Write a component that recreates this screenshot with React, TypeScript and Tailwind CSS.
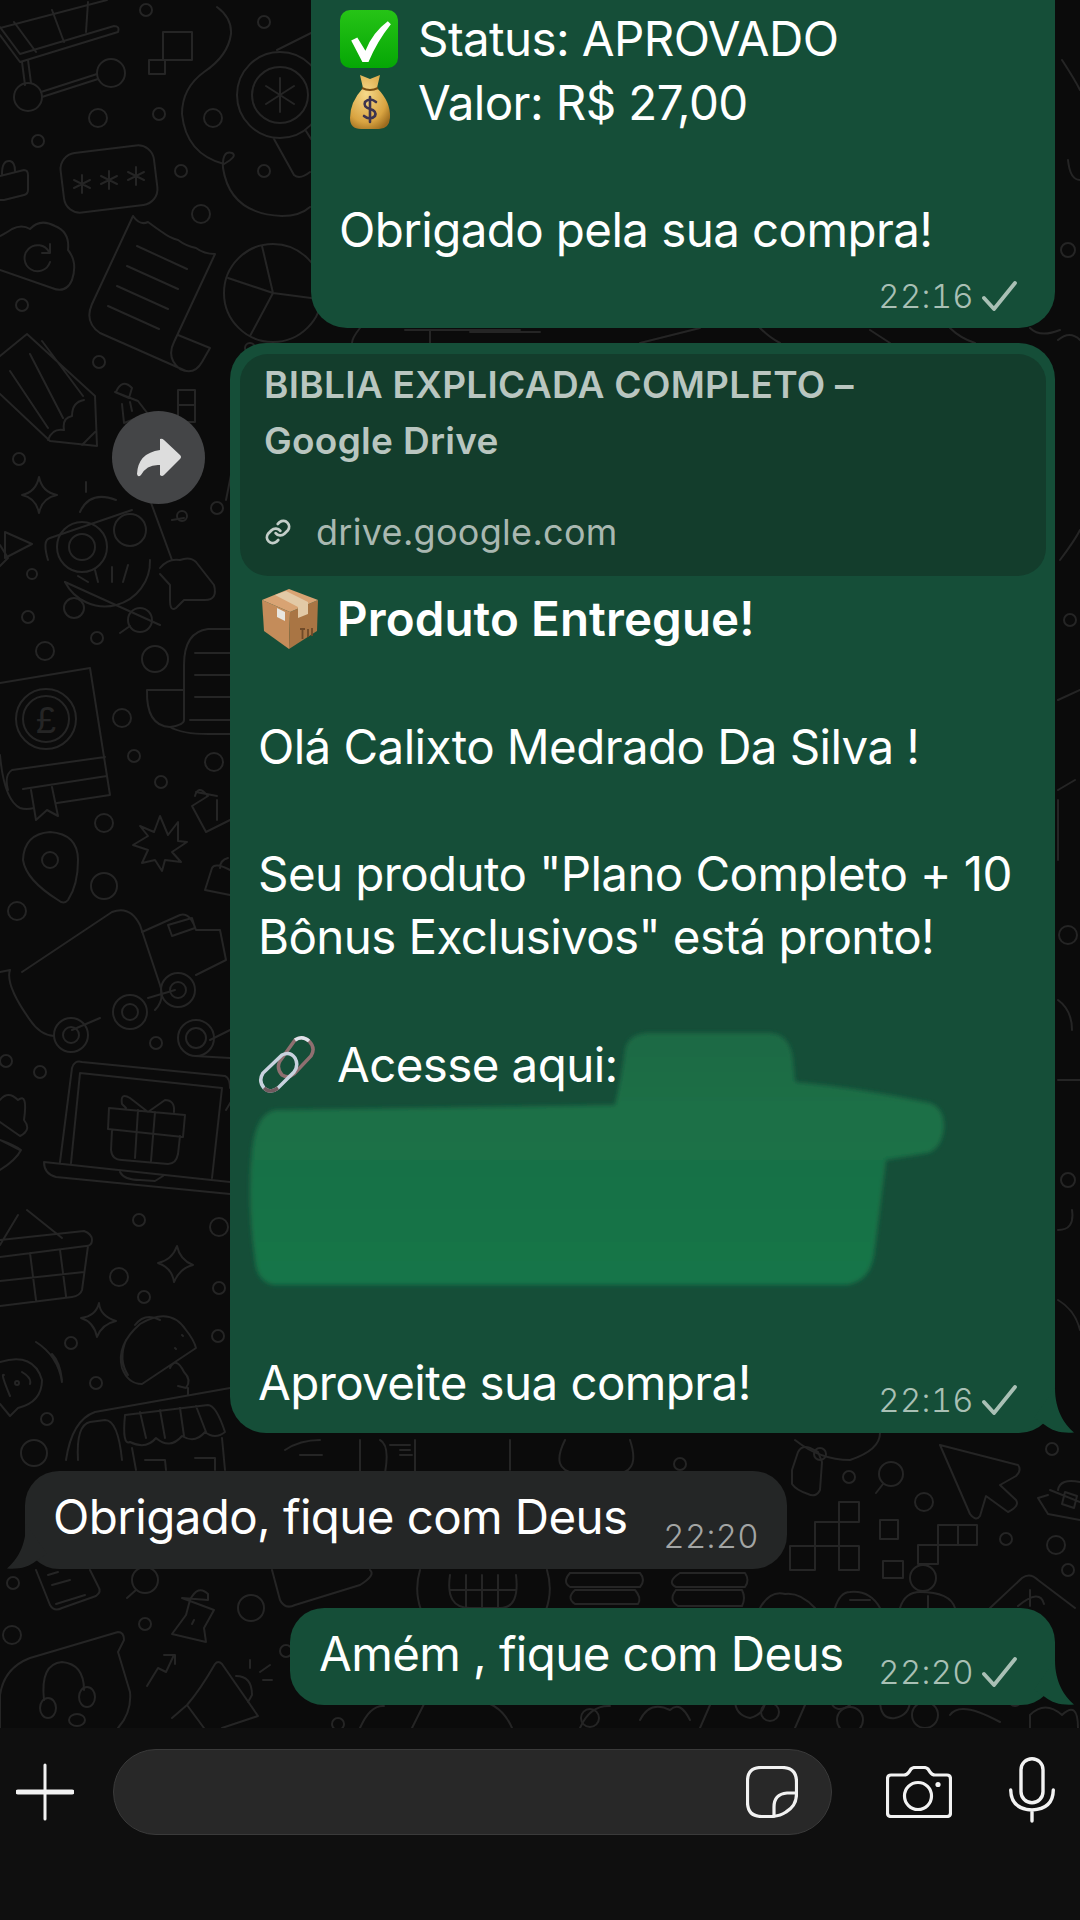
import type { ReactNode } from 'react';

const dots: [number, number, number][] = [
  [146, 10, 6], [264, 22, 6], [98, 118, 9], [159, 114, 6], [213, 118, 9], [38, 141, 6], [181, 171, 6], [264, 171, 6],
  [201, 214, 9], [22, 305, 6], [99, 362, 6], [19, 459, 6], [217, 508, 6], [28, 617, 6], [97, 638, 6], [45, 651, 9],
  [155, 659, 13], [122, 718, 9], [134, 756, 6], [161, 782, 6], [214, 762, 9], [104, 823, 9], [17, 911, 9], [104, 886, 13],
  [156, 1043, 6], [6, 1061, 6], [40, 1072, 6], [139, 1220, 6], [219, 1227, 9], [119, 1277, 9], [219, 1288, 6], [144, 1297, 6],
  [71, 1343, 6], [96, 1383, 6], [47, 1419, 6], [218, 1336, 6], [34, 1453, 13], [13, 1583, 6], [12, 1635, 9], [145, 1624, 6],
  [251, 1608, 13], [286, 1651, 6], [680, 1464, 6], [820, 1454, 6], [849, 1477, 6], [924, 1502, 9], [1052, 1449, 6],
  [1006, 1539, 6], [1056, 1545, 9], [923, 1578, 13], [1015, 1700, 6], [388, 1690, 9], [338, 1724, 6], [250, 348, 5], [1068, 1570, 6],
  [925, 1715, 13], [850, 1720, 13], [590, 1718, 9], [770, 1712, 9],
];

function Doodles() {
  return (
    <svg className="absolute left-0 top-0 w-[1080px] h-[1728px]" viewBox="0 0 1080 1728" fill="none" stroke="#252525" strokeWidth="2" strokeLinecap="round" strokeLinejoin="round">
      {dots.map(([cx, cy, r]) => (
        <circle key={`${cx}-${cy}`} cx={cx} cy={cy} r={r} />
      ))}
      {/* cart */}
      <path d="M0 35 L20 62 L118 32 Q120 26 114 26 L20 54 L0 27 M0 28 L107 0 M14 22 L36 52 M52 10 L64 42 M88 2 L86 32 M22 62 L25 85 M28 60 L31 83 M41 92 L97 74 M42 97 L98 79" />
      <circle cx="28" cy="97" r="14" />
      <circle cx="111" cy="73" r="14" />
      <path d="M163 32 H192 V60 H163 Z M149 60 H165 V74 H149 Z" />
      {/* cord and magnifier */}
      <path d="M217 7 Q232 18 231 34 Q228 56 204 72 Q182 88 182 114 Q186 154 224 164 Q238 156 232 153 Q222 150 223 168 Q230 214 282 216 Q300 216 310 207" />
      <circle cx="280" cy="95" r="43" />
      <circle cx="280" cy="95" r="28" />
      <path d="M280 78 V112 M266 86 L294 104 M266 104 L294 86 M274 139 L294 175 Q300 180 310 172 M306 131 L311 139 M277 50 L311 33" />
      {/* password */}
      <rect x="62" y="149" width="94" height="60" rx="16" transform="rotate(-7 109 179)" />
      <path d="M82 175 V193 M74 180 L90 188 M74 188 L90 180 M109 171 V189 M101 176 L117 184 M101 184 L117 176 M136 167 V185 M128 172 L144 180 M128 180 L144 172" />
      <path d="M0 176 L24 170 Q28 170 28 175 L28 190 Q28 194 24 195 L4 200 Q0 200 0 200 M2 174 Q2 160 10 161 Q15 162 15 171" />
      {/* cloud */}
      <path d="M0 236 Q8 232 12 229 Q22 224 30 229 Q40 218 55 226 Q70 232 68 250 Q78 262 72 280 Q66 294 52 288 L0 270" />
      <path d="M49 252 A13 13 0 1 0 50 262 M50 244 V253 H42" />
      {/* receipt */}
      <path d="M133 216 Q140 226 148 222 Q156 228 162 232 Q170 238 178 240 Q186 246 196 248 Q204 254 215 254 L174 342 Q166 358 180 369 Q194 376 202 362 L210 348 L178 335 M133 216 L92 304 Q84 322 100 333 L186 371" />
      <path d="M137 246 L187 269 M127 266 L178 289 M117 286 L168 309 M108 306 L159 329" />
      {/* pie */}
      <circle cx="273" cy="293" r="49" />
      <path d="M273 293 L262 246 M273 293 L228 278 M273 293 L250 336 M273 293 L311 298" />
      {/* pencil */}
      <path d="M0 356 L27 334 L95 396 L97 446 L50 441 L0 394 M42 341 L83 396 M30 354 L63 418 M10 371 L48 428 M82 445 L95 432 M48 440 Q52 428 64 430 Q62 418 72 416 Q72 402 84 400" />
      {/* pin, squares, star */}
      <path d="M116 392 Q122 378 132 388 L129 398 L115 392 L138 401 L148 414 L124 423 L122 404 M130 402 L132 411" />
      <path d="M178 390 H195 V422 H178 Z M178 405 H195" />
      <path d="M39 477 Q42 492 57 495 Q42 498 39 513 Q36 498 22 495 Q36 492 39 477 Z" />
      {/* robot */}
      <path d="M80 512 Q90 490 116 500 M86 482 V492 M50 538 L132 510 M48 560 Q42 540 50 538 M5 532 L32 544 L5 558 Z" />
      <circle cx="82" cy="547" r="25" />
      <circle cx="82" cy="547" r="13" />
      <circle cx="130" cy="530" r="16" />
      <path d="M150 500 L172 560 M172 520 L184 518 M160 625 L65 582" />
      <circle cx="182" cy="516" r="5" />
      <path d="M65 582 A45 45 0 0 0 150 560 M78 576 L88 582 M95 570 L98 582 M112 567 L112 582 M128 565 L123 582" />
      <circle cx="74" cy="608" r="10" />
      <path d="M160 568 Q168 558 180 560 Q190 556 196 562 L214 585 Q218 600 205 600 L184 600 L176 608 Q170 612 170 600 L170 585 L160 574" />
      <circle cx="32" cy="574" r="5" />
      <path d="M0 545 L8 558 L0 566 M120 633 L130 626" />
      <circle cx="140" cy="620" r="12" />
      {/* scroll */}
      <path d="M230 629 H208 Q184 632 184 665 V720 Q184 725 170 727 Q146 726 147 690 H184 M230 653 H195 M230 675 H195 M230 697 H195 M230 720 H190 M170 727 Q182 734 208 734 H230" />
      {/* book */}
      <path d="M0 683 L90 668 L110 795 L57 803 M0 755 Q4 800 20 808 Q26 810 34 808 M105 757 L12 770 Q4 775 8 790 M107 776 L23 789 M31 790 L36 820 L47 810 L58 816 L52 787" />
      <circle cx="46" cy="719" r="30" />
      <circle cx="46" cy="719" r="23" />
      <text x="36" y="733" fontSize="36" fill="#252525" stroke="none" fontFamily="Liberation Sans, sans-serif">£</text>
      {/* map pin */}
      <path d="M50 832 Q78 834 78 860 Q78 885 68 900 Q64 905 58 900 Q26 880 23 860 Q24 834 50 832 Z" />
      <circle cx="50" cy="860" r="8" />
      {/* burst */}
      <path d="M160 816 L168 835 L178 822 L178 841 L187 842 L172 852 L181 862 L165 860 L162 871 L155 860 L142 863 L148 850 L133 845 L148 836 L140 826 L154 832 Z" />
      {/* pin2 and lock */}
      <path d="M195 796 Q198 785 206 794 L208 796 L192 806 L206 832 L230 820 M217 800 V820 M196 792 L217 796" />
      <path d="M205 890 L230 895 M205 890 L212 868 Q215 862 230 870 M220 868 Q220 860 228 858" />
      {/* truck */}
      <path d="M22 972 L112 912 Q130 905 140 925 L160 985 Q165 1000 155 1010 M10 970 L0 972 M142 932 L180 915 Q190 912 196 930 L220 930 L226 960 L196 975 M168 925 L192 918 L195 928 L172 936 Z M10 970 Q5 985 30 1020 M175 990 L148 998 M100 1018 L72 1030" />
      <circle cx="178" cy="990" r="17" />
      <circle cx="178" cy="990" r="8" />
      <circle cx="130" cy="1012" r="17" />
      <circle cx="130" cy="1012" r="8" />
      <circle cx="71" cy="1035" r="17" />
      <circle cx="71" cy="1035" r="8" />
      <circle cx="196" cy="1038" r="18" />
      <circle cx="196" cy="1038" r="10" />
      <path d="M195 1056 L230 1058 M210 1040 L230 1030 M30 1020 Q40 1035 54 1036" />
      {/* laptop */}
      <path d="M60 1162 L72 1068 Q74 1060 82 1062 L225 1076 Q230 1078 230 1088 M71 1163 L80 1073 L222 1088 L212 1178 M44 1162 L230 1182 M44 1162 Q44 1174 56 1177 L230 1194 M120 1172 Q124 1180 140 1180 L155 1181 L163 1176" />
      {/* gift */}
      <path d="M109 1108 L185 1115 L183 1137 L108 1129 Z M112 1130 L111 1150 Q112 1160 122 1160 L168 1164 Q176 1164 178 1154 L180 1136 M138 1110 L135 1158 M155 1112 L151 1161 M148 1112 L130 1098 Q120 1092 122 1104 L126 1108 M148 1112 L165 1100 Q175 1100 174 1112" />
      {/* flower */}
      <path d="M0 1100 Q8 1090 18 1100 Q28 1092 24 1120 Q32 1130 20 1136 L0 1122 M0 1140 L20 1150 M0 1170 Q16 1160 21 1150 Q14 1145 0 1140" />
      {/* basket */}
      <path d="M0 1240 L84 1231 Q92 1234 92 1240 Q92 1246 86 1246 L0 1257 M88 1246 L82 1290 Q80 1296 72 1297 L0 1306 M0 1281 L84 1272 M30 1253 L36 1300 M60 1250 L66 1296 M0 1245 L18 1215 M27 1210 L62 1238" />
      <path d="M177 1246 Q180 1260 193 1265 Q180 1268 174 1282 Q172 1268 158 1263 Q172 1260 177 1246 Z M99 1303 Q100 1316 116 1321 Q102 1324 97 1337 Q94 1322 81 1318 Q96 1316 99 1303 Z" />
      {/* taco */}
      <path d="M196 1348 L142 1384 Q128 1384 122 1368 Q116 1345 140 1324 Q170 1306 186 1330 Q194 1340 196 1348 Z M128 1375 Q118 1360 126 1340 M135 1325 Q145 1312 160 1320 M175 1348 L176 1349 M182 1335 L183 1336 M170 1368 Q176 1356 184 1372 Q192 1380 186 1388 L178 1386 M188 1388 V1395" />
      {/* speech */}
      <path d="M0 1362 Q34 1352 42 1380 Q42 1402 18 1408 L10 1416 L0 1404 M4 1375 Q0 1372 10 1396 M22 1372 Q32 1378 30 1384 M36 1342 Q58 1356 62 1382 M52 1354 Q60 1362 62 1380" />
      <circle cx="17" cy="1383" r="2" />
      {/* market */}
      <path d="M66 1460 Q72 1420 95 1412 L230 1388 M78 1460 Q76 1425 90 1422 L105 1420 Q118 1420 122 1460 M125 1415 L208 1405 Q216 1405 225 1432 Q215 1440 205 1432 Q195 1444 182 1436 Q170 1450 156 1438 Q146 1450 130 1442 Q122 1446 125 1415 M140 1412 L146 1438 M160 1410 L165 1438 M180 1408 L184 1436 M196 1406 L206 1432 M132 1448 L136 1470 M222 1438 L225 1470 M145 1460 H165 L166 1470 M195 1458 H215 V1470" />
      <path d="M285 1450 Q300 1440 320 1440 M360 1440 V1473 M380 1440 Q390 1445 385 1473 M415 1440 V1473 M510 1440 V1470 M565 1440 Q550 1470 575 1473 M630 1440 Q640 1470 620 1473 M795 1440 Q820 1460 850 1460 Q880 1450 880 1433 M300 1455 H322 M400 1455 H412 M400 1450 H410 M390 1445 H410" />
      {/* folder, lens */}
      <path d="M792 1470 L798 1452 Q802 1445 810 1448 L818 1452 L822 1462 L820 1490 Q816 1498 808 1494 Q796 1490 792 1484 Z" />
      <circle cx="891" cy="1474" r="12" />
      <path d="M883 1484 L876 1493" />
      <path d="M940 1445 L1018 1465 Q1022 1470 1016 1476 L1000 1485 L1016 1500 Q1020 1506 1008 1512 L986 1496 L980 1516 Q976 1522 970 1514 Z" />
      <path d="M1050 1490 L1080 1502 M1048 1495 L1038 1498 L1048 1514 L1080 1520 M1058 1490 Q1060 1478 1080 1482 M1065 1492 L1062 1504 L1074 1508 L1077 1496 Z" />
      <path d="M839 1502 H859 V1522 H839 Z M815 1522 H839 V1570 H859 M839 1522 V1546 H859 V1570 H839 V1546 M790 1546 H815 V1570 H790 Z M815 1546 V1522 M815 1546 H839 M880 1520 H898 V1539 H880 Z M883 1561 H903 V1578 H883 Z M938 1525 H958 V1545 H938 Z M958 1525 H977 V1545 H958 M918 1545 H938 V1564 H918 Z" />
      {/* lower strip */}
      <path d="M36 1570 L50 1605 Q54 1612 62 1608 L96 1596 Q102 1592 98 1586 L90 1570 M52 1585 L70 1580 M56 1604 L85 1595 M48 1575 L58 1572" />
      <circle cx="145" cy="1580" r="13" />
      <path d="M136 1590 L127 1598" />
      <path d="M190 1600 Q198 1584 208 1594 L208 1600 L182 1598 L214 1610 L204 1628 L206 1642 L172 1634 L186 1615 Z M194 1620 L192 1624" />
      <path d="M272 1570 L280 1600 Q285 1610 295 1605 L360 1585 Q376 1575 370 1570" />
      <path d="M420 1570 A64 64 0 0 0 421 1610 M547 1570 A64 64 0 0 1 546 1610 M450 1575 Q445 1608 470 1608 H500 Q520 1608 516 1575 M450 1590 H516 M482 1575 V1608 M498 1575 V1608 M466 1575 V1608" />
      <path d="M570 1573 H640 Q646 1580 640 1587 H570 Q562 1582 570 1573 M575 1590 H635 Q642 1598 638 1604 H575 Q566 1598 575 1590 M680 1573 H745 Q750 1580 745 1587 H676 Q666 1582 680 1573 M676 1590 H742 Q746 1598 742 1606 H678 Q668 1600 676 1590" />
      <path d="M760 1608 Q770 1590 785 1594 Q800 1592 815 1608 M835 1608 Q840 1592 850 1592 Q870 1590 880 1608 M850 1600 H870 M900 1608 Q905 1592 920 1592 Q950 1592 955 1608 M928 1596 V1608 M990 1608 L1022 1578 Q1030 1572 1038 1580 L1075 1608 M1030 1590 V1606 M1018 1606 Q1040 1588 1044 1604" />
      {/* headset corner */}
      <path d="M0 1695 Q4 1668 30 1658 L118 1632 Q124 1632 124 1640 L118 1652 L130 1692 Q132 1712 118 1728 M0 1695 V1728" />
      <path d="M44 1700 Q40 1664 62 1662 Q84 1664 84 1690" />
      <ellipse cx="48" cy="1708" rx="8" ry="10" />
      <ellipse cx="87" cy="1697" rx="8" ry="10" />
      <ellipse cx="77" cy="1720" rx="8" ry="6" />
      <path d="M147 1686 L158 1668 L166 1672 L174 1655 M164 1655 L175 1655 L175 1664" />
      <path d="M172 1718 L187 1705 Q200 1690 215 1664 Q218 1660 222 1664 L258 1716 L222 1728 M187 1705 L204 1728 M236 1676 Q252 1676 252 1695 L248 1702 M250 1660 V1668 M270 1665 L260 1672 M263 1680 H272" />
      <path d="M360 1728 Q370 1705 384 1706 M412 1728 L426 1700 M470 1700 Q500 1700 512 1728 M580 1728 Q590 1705 610 1706 M640 1720 Q650 1700 670 1710 Q680 1700 690 1720 M700 1728 L710 1705 M735 1700 Q735 1715 750 1718 Q765 1714 765 1700 M795 1728 L805 1705 M830 1700 Q835 1715 850 1705 M880 1700 Q880 1720 895 1718 Q910 1715 910 1700 M950 1715 Q960 1700 1000 1722 M1030 1715 Q1045 1700 1062 1715 Q1078 1700 1078 1728 M1030 1715 V1728" />
      {/* top strip and right edge */}
      <path d="M360 328 Q352 338 352 343 M405 330 H520 M430 330 V343 M470 332 H540 M700 328 L640 343 M760 328 Q770 338 780 343 M870 330 L890 343 M950 328 Q960 338 975 343 M1030 328 Q1040 338 1060 330 M1062 60 Q1075 80 1080 90 M1068 160 Q1070 180 1080 180 M1058 340 Q1070 330 1080 340 M1060 560 Q1075 540 1080 530 M1058 700 L1080 690 M1058 790 L1075 780 M1058 800 V860 M1058 1000 Q1072 1010 1072 1030 M1058 1080 H1080 M1058 1230 Q1075 1230 1072 1210 M1058 1300 Q1075 1310 1080 1330 M232 1100 L226 1110 M232 470 L226 500" />
      <circle cx="1068" cy="1180" r="7" />
      <circle cx="1068" cy="250" r="7" />
      <circle cx="1070" cy="620" r="6" />
      <circle cx="1068" cy="935" r="9" />
    </svg>
  );
}

function CheckEmoji() {
  return (
    <svg width="58" height="58" viewBox="0 0 57 57" className="shrink-0">
      <defs>
        <linearGradient id="boxg" x1="0" y1="0" x2="0" y2="1">
          <stop offset="0" stopColor="#26c416" />
          <stop offset="1" stopColor="#05a705" />
        </linearGradient>
      </defs>
      <rect width="57" height="57" rx="10" fill="url(#boxg)" />
      <path d="M11 30 L17 27 L25 40 Q32 22 47 11 L50 14 Q37 30 28 51 L22 51 Z" fill="#fff" />
    </svg>
  );
}

function BagEmoji() {
  return (
    <svg width="42" height="56" viewBox="0 0 42 56" className="shrink-0">
      <defs>
        <radialGradient id="bagg" cx="0.4" cy="0.35" r="0.75">
          <stop offset="0" stopColor="#f6d98a" />
          <stop offset="0.7" stopColor="#d9a441" />
          <stop offset="1" stopColor="#9c6b1e" />
        </radialGradient>
      </defs>
      <path d="M11 1 L21 5 L31 1 L28 14 Q42 28 41 44 Q40 55 30 55 H12 Q1 55 1 44 Q1 28 14 14 Z" fill="url(#bagg)" />
      <path d="M13 14 Q21 18 29 14" stroke="#7a4e12" strokeWidth="2" fill="none" />
      <path d="M27 28 Q21 23 16 28 Q14 33 21 35 Q28 37 26 42 Q21 47 15 42 M21 23 V48" stroke="#3c3450" strokeWidth="2.6" fill="none" strokeLinecap="round" />
    </svg>
  );
}

function BoxEmoji() {
  return (
    <svg width="57" height="60" viewBox="0 0 57 60" className="shrink-0">
      <path d="M0 11 L28 23 L27 60 L2 42 Z" fill="#c48c5a" />
      <path d="M28 23 L56 11 L55 42 L27 60 Z" fill="#a97544" />
      <path d="M0 11 L27 0 L56 11 L28 23 Z" fill="#d8a373" />
      <path d="M13 6 L24 2 L46 13 L46 25 L36 29 L36 18 Z" fill="#e2c9a6" />
      <path d="M15 19 L23 23 V32 L15 28 Z" fill="#e8e6e0" />
      <path d="M38 40 H43 M40.500 40 V50 M46 40 V48 M50 39 V47" stroke="#6f4a28" strokeWidth="1.800" fill="none" />
    </svg>
  );
}

function LinkEmoji() {
  return (
    <svg width="60" height="60" viewBox="0 0 60 60" fill="none" className="shrink-0">
      <path d="M37 6 Q44 1 51 7 Q58 14 53 22 L36 40 Q30 45 24 41 Q18 34 22 27 Z" stroke="#8f6f70" strokeWidth="3.500" />
      <path d="M37 6 Q44 1 51 7" stroke="#dfe3ea" strokeWidth="3.500" />
      <path d="M24 21 Q32 17 37 24 Q41 31 36 38 L20 54 Q12 60 6 54 Q0 47 5 39 Z" stroke="#c8d2de" strokeWidth="3.500" />
      <path d="M20 54 Q12 60 6 54" stroke="#6f5a5e" strokeWidth="3.500" />
    </svg>
  );
}

function Tail({ side, color }: { side: 'left' | 'right'; color: string }) {
  if (side === 'right') {
    return (
      <svg className="absolute right-[-19px] bottom-0" width="40" height="45" viewBox="0 0 40 45">
        <path d="M21 0 C21 22 30 36 40 44.500 C28 45.500 18 43 11 37 L0 30 Z" fill={color} />
      </svg>
    );
  }
  return (
    <svg className="absolute left-[-18px] bottom-0" width="40" height="45" viewBox="0 0 40 45">
      <path d="M19 0 C19 22 10 36 0 44.500 C12 45.500 22 43 29 37 L40 30 Z" fill={color} />
    </svg>
  );
}

function Meta({ time, check, muted }: { time: string; check?: boolean; muted?: boolean }) {
  return (
    <div className={`flex items-center gap-[8px] text-[33px] leading-[40px] tracking-[0.3px] font-light tabular-nums ${muted ? 'text-[#a3a5a4]' : 'text-[#a9c0b5]'}`}>
      <span>{time}</span>
      {check && (
        <svg width="36" height="30" viewBox="0 0 36 30" fill="none" stroke="#a9c0b5" strokeWidth="3.800" strokeLinecap="round" strokeLinejoin="round">
          <path d="M2 17 L12 28 L33 2" />
        </svg>
      )}
    </div>
  );
}

function Line({ children, emoji }: { children?: ReactNode; emoji?: ReactNode }) {
  return (
    <div className="flex items-center h-[63.6px] whitespace-nowrap">
      {emoji && <div className="w-[79px] flex justify-start">{emoji}</div>}
      {children}
    </div>
  );
}

function Redaction() {
  return (
    <svg className="absolute left-[-230px] top-[-343px]" width="1080" height="1433" viewBox="0 0 1080 1433">
      <defs>
        <linearGradient id="blobg" x1="0" y1="0" x2="0" y2="1">
          <stop offset="0" stopColor="#1b6a45" />
          <stop offset="0.35" stopColor="#1a7046" />
          <stop offset="1" stopColor="#197548" />
        </linearGradient>
        <filter id="blobb" x="-5%" y="-5%" width="110%" height="110%">
          <feGaussianBlur stdDeviation="2" />
        </filter>
      </defs>
      <path
        d="M615 1105 Q622 1075 625 1050 Q628 1034 648 1033 L770 1033 Q790 1034 793 1060 L795 1082 Q860 1088 930 1103 Q944 1108 944 1127 Q942 1148 928 1153 L886 1160 L874 1255 Q870 1282 845 1285 L275 1285 Q257 1283 255 1260 Q247 1200 252 1150 Q256 1114 275 1110 Z"
        fill="url(#blobg)"
        filter="url(#blobb)"
      />
    </svg>
  );
}

export default function App() {
  return (
    <div className="w-[1080px] h-[1920px] flex flex-col bg-[#0b0b0b] overflow-hidden font-['Inter',sans-serif] text-[47.5px] tracking-[-0.6px] text-white">
      <div className="relative h-[1728px] flex flex-col justify-end items-stretch overflow-hidden pb-[23px] pl-[25px] pr-[25px]">
        <Doodles />

        {/* receipt message */}
        <div className="relative self-end shrink-0 w-[744px] bg-[#154e38] rounded-b-[36px] pt-[60px] pl-[28px] pr-[37px] pb-[12px] mb-[15px]">
          <Line emoji={<div className="pl-[1px]"><CheckEmoji /></div>}>Status: APROVADO</Line>
          <Line emoji={<div className="pl-[10px]"><BagEmoji /></div>}>Valor: R$ 27,00</Line>
          <Line />
          <Line>Obrigado pela sua compra!</Line>
          <div className="flex justify-end mt-[15px]">
            <Meta time="22:16" check />
          </div>
        </div>

        {/* delivery message */}
        <div className="relative self-end shrink-0 w-[825px] bg-[#154e38] rounded-[36px] pt-[11px] pl-[10px] pr-[9px] pb-[19px] mb-[38px]">
          <Tail side="right" color="#154e38" />
          <div className="h-[222px] bg-[#133d2c] rounded-[28px] pl-[24px] pt-[3px] text-[#b9c6c0] tracking-normal">
            <p className="text-[37px] font-semibold leading-[56px] tracking-[0.3px]">BIBLIA EXPLICADA COMPLETO –</p>
            <p className="text-[37px] font-semibold leading-[56px] tracking-[0.3px]">Google Drive</p>
            <div className="flex items-center gap-[24px] mt-[41px] text-[#a9b8b1]">
              <svg width="28" height="28" viewBox="0 0 24 24" fill="none" stroke="#c3cec9" strokeWidth="2.400" strokeLinecap="round" strokeLinejoin="round">
                <path d="M10 13a5 5 0 0 0 7.500.500l3-3a5 5 0 0 0-7-7l-1.700 1.700" />
                <path d="M14 11a5 5 0 0 0-7.500-.500l-3 3a5 5 0 0 0 7 7l1.700-1.700" />
              </svg>
              <span className="text-[36px] leading-[44px] tracking-[0.3px]">drive.google.com</span>
            </div>
          </div>
          <div className="relative pl-[18px] pr-[28px] mt-[11px]">
            <Line emoji={<div className="pl-[4px]"><BoxEmoji /></div>}>
              <span className="font-semibold tracking-[0.1px]">Produto Entregue!</span>
            </Line>
            <Line />
            <Line>Olá Calixto Medrado Da Silva !</Line>
            <Line />
            <Line>Seu produto "Plano Completo + 10</Line>
            <Line>Bônus Exclusivos" está pronto!</Line>
            <Line />
            <Line emoji={<LinkEmoji />}>Acesse aqui:</Line>
            <Line />
            <Line />
            <Line />
            <Line />
            <div className="flex items-center justify-between h-[63.6px]">
              <span>Aproveite sua compra!</span>
              <div className="pt-[36px]">
                <Meta time="22:16" check />
              </div>
            </div>
          </div>
          <div className="absolute left-0 top-0 pointer-events-none">
            <Redaction />
          </div>
        </div>

        {/* forward button */}
        <div className="absolute left-[112px] top-[411px] w-[93px] h-[93px] rounded-full bg-[#444547] flex items-center justify-center">
          <svg width="46" height="40" viewBox="0 0 46 40" fill="#dddddd">
            <path d="M24 1 Q26 0 28 2 L44 17 Q46 19 44 21 L28 37 Q26 39 24 37 L24 27 Q11 26 5 37 Q2 40 1 36 Q2 15 24 12 Z" />
          </svg>
        </div>

        {/* received */}
        <div className="relative self-start shrink-0 w-[762px] h-[98px] bg-[#242626] rounded-[34px] pl-[28px] pr-[28px] flex justify-between mb-[39px]">
          <Tail side="left" color="#242626" />
          <span className="relative pt-[16px] leading-[60px]">Obrigado, fique com Deus</span>
          <div className="relative pt-[45px]">
            <Meta time="22:20" muted />
          </div>
        </div>

        {/* sent */}
        <div className="relative self-end shrink-0 w-[765px] h-[97px] bg-[#154e38] rounded-[34px] pl-[29px] pr-[37px] flex justify-between">
          <Tail side="right" color="#154e38" />
          <span className="relative pt-[16px] leading-[60px]">Amém , fique com Deus</span>
          <div className="relative pt-[44px]">
            <Meta time="22:20" check />
          </div>
        </div>
      </div>

      {/* composer */}
      <div className="flex-1 bg-[#0f0f0f] flex items-start pt-[21px]">
        <svg className="ml-[16px] mt-[14px] shrink-0" width="58" height="58" viewBox="0 0 58 58" fill="none" stroke="#f2f2f2" strokeLinecap="round">
          <path d="M29 2 V56" strokeWidth="3" />
          <path d="M2 29 H56" strokeWidth="5" />
        </svg>
        <div className="ml-[39px] w-[719px] h-[86px] rounded-[43px] bg-[#282828] border border-[#3a3a3a] flex items-center justify-end pr-[33px] shrink-0">
          <svg width="52" height="52" viewBox="0 0 52 52" fill="none" stroke="#f2f2f2" strokeWidth="3.200" strokeLinejoin="round" strokeLinecap="round">
            <path d="M15 1.500 H36 Q50.500 1.500 50.500 16 V28 Q50.500 40 40 46 Q34 50 26 50.500 H16 Q1.500 50.500 1.500 36 V15 Q1.500 1.500 15 1.500 Z" />
            <path d="M50 27 H41 Q28 28 28 41 V50" />
          </svg>
        </div>
        <svg className="ml-[54px] mt-[17px] shrink-0" width="66" height="52" viewBox="0 0 66 52" fill="none" stroke="#f2f2f2" strokeWidth="3.200" strokeLinejoin="round">
          <path d="M5 9 H18 Q21 9 23 6 L25 3 Q26.500 1.500 29 1.500 H38 Q40.500 1.500 42 3 L44 6 Q46 9 49 9 H61 Q64.500 9 64.500 13 V47 Q64.500 50.500 61 50.500 H5 Q1.500 50.500 1.500 47 V13 Q1.500 9 5 9 Z" />
          <circle cx="32" cy="30" r="13.500" />
          <circle cx="52" cy="18.500" r="2.600" fill="#f2f2f2" stroke="none" />
        </svg>
        <svg className="ml-[57px] mt-[8px] shrink-0" width="46" height="66" viewBox="0 0 46 66" fill="none" stroke="#f2f2f2" strokeWidth="3.400" strokeLinecap="round">
          <rect x="12" y="1.700" width="22" height="44" rx="11" />
          <path d="M1.700 33 Q2 52 23 53 Q44 52 44.300 33 M23 53 V64" />
        </svg>
      </div>
    </div>
  );
}
